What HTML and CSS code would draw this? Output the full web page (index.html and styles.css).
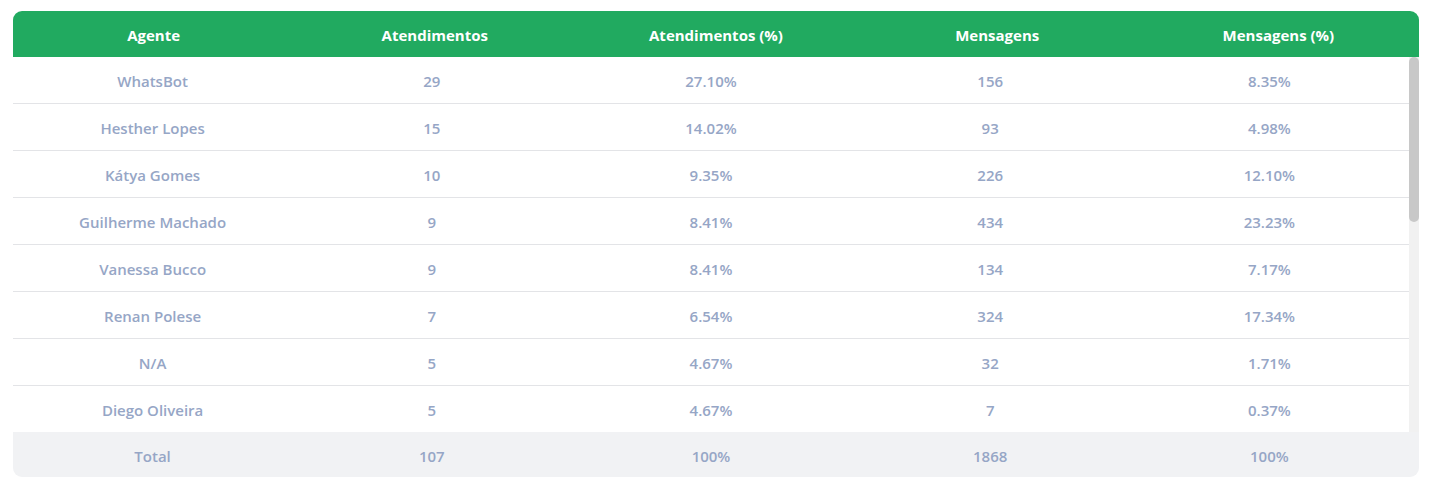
FILE: index.html
```html
<!DOCTYPE html>
<html lang="pt-BR">
<head>
<meta charset="utf-8">
<title>Agentes</title>
<link rel="stylesheet" href="styles.css">
</head>
<body>
<div class="page">
  <div class="card">
    <div class="row head">
      <div>Agente</div><div>Atendimentos</div><div>Atendimentos (%)</div><div>Mensagens</div><div>Mensagens (%)</div>
    </div>
    <div class="middle">
      <div class="rows">
        <div class="row body"><div>WhatsBot</div><div>29</div><div>27.10%</div><div>156</div><div>8.35%</div></div>
        <div class="row body"><div>Hesther Lopes</div><div>15</div><div>14.02%</div><div>93</div><div>4.98%</div></div>
        <div class="row body"><div>Kátya Gomes</div><div>10</div><div>9.35%</div><div>226</div><div>12.10%</div></div>
        <div class="row body"><div>Guilherme Machado</div><div>9</div><div>8.41%</div><div>434</div><div>23.23%</div></div>
        <div class="row body"><div>Vanessa Bucco</div><div>9</div><div>8.41%</div><div>134</div><div>7.17%</div></div>
        <div class="row body"><div>Renan Polese</div><div>7</div><div>6.54%</div><div>324</div><div>17.34%</div></div>
        <div class="row body"><div>N/A</div><div>5</div><div>4.67%</div><div>32</div><div>1.71%</div></div>
        <div class="row body last"><div>Diego Oliveira</div><div>5</div><div>4.67%</div><div>7</div><div>0.37%</div></div>
      </div>
      <div class="track"><div class="thumb"></div></div>
    </div>
    <div class="row foot">
      <div>Total</div><div>107</div><div>100%</div><div>1868</div><div>100%</div>
    </div>
  </div>
</div>
</body>
</html>
```

FILE: styles.css
```css
html, body {
  margin: 0;
  padding: 0;
  background: #ffffff;
}

.page {
  padding: 11px 13px;
  font-family: "Open Sans", "Noto Sans", sans-serif;
  font-size: 15px;
}

.card {
  border-radius: 9px;
  overflow: hidden;
  background: #ffffff;
}

.row {
  box-sizing: border-box;
  display: grid;
  grid-template-columns: repeat(5, 1fr);
  align-items: center;
  text-align: center;
  padding-top: 2px;
}

.head {
  height: 46px;
  background: #21aa60;
  color: #ffffff;
  font-weight: 700;
}

.middle {
  display: flex;
  height: 375px;
  overflow: hidden;
}

.rows {
  flex: 1;
}

.track {
  width: 10px;
  background: #f1f1f1;
}

.thumb {
  height: 165px;
  background: #c8c8c8;
  border-radius: 5px;
}

.body {
  height: 47px;
  border-bottom: 1px solid #e3e4e7;
  color: #96a6c6;
  font-weight: 600;
}

.body.last {
  height: 46px;
  border-bottom: 0;
}

.foot {
  height: 45px;
  padding-right: 10px;
  background: #f1f2f4;
  color: #96a6c6;
  font-weight: 600;
}
```
